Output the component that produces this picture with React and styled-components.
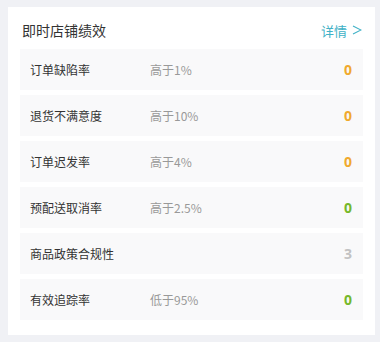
import React from "react";
import styled, { createGlobalStyle } from "styled-components";

const GlobalStyle = createGlobalStyle`
  html, body {
    margin: 0;
    padding: 0;
    background: #f0f1f5;
  }
  body {
    font-family: "Noto Sans CJK SC", "Noto Sans", sans-serif;
  }
`;

const Page = styled.div`
  padding: 7px 5px 7px 8px;
  width: 380px;
  height: 342px;
  box-sizing: border-box;
`;

const Card = styled.div`
  background: #fff;
  width: 367px;
  box-sizing: border-box;
  padding: 8px 12px 15px;
`;

const Header = styled.div`
  display: flex;
  align-items: center;
  justify-content: space-between;
  height: 30px;
  margin-bottom: 4px;
  padding: 0 1px 0 2px;
`;

const Title = styled.h2`
  margin: 0;
  font-size: 14px;
  font-weight: 400;
  color: #333;
`;

const More = styled.a`
  font-size: 13px;
  color: #3fb1c6;
  text-decoration: none;
  display: flex;
  align-items: center;
  gap: 5px;
`;

const List = styled.div`
  display: flex;
  flex-direction: column;
  gap: 5px;
`;

const Row = styled.div`
  display: flex;
  align-items: center;
  height: 41px;
  background: #f9f9fa;
  padding: 0 11px 0 10px;
`;

const Label = styled.span`
  width: 120px;
  font-size: 12px;
  color: #333;
`;

const Threshold = styled.span`
  flex: 1;
  font-size: 12px;
  color: #999;
`;

const Value = styled.span`
  font-size: 14px;
  font-weight: 700;
  font-family: "Noto Sans", sans-serif;
  color: ${(p) =>
    p.tone === "warn" ? "#f0a92e" : p.tone === "good" ? "#76b82a" : "#c2c2c2"};
`;

const rows = [
  { label: "订单缺陷率", threshold: "高于1%", value: 0, tone: "warn" },
  { label: "退货不满意度", threshold: "高于10%", value: 0, tone: "warn" },
  { label: "订单迟发率", threshold: "高于4%", value: 0, tone: "warn" },
  { label: "预配送取消率", threshold: "高于2.5%", value: 0, tone: "good" },
  { label: "商品政策合规性", threshold: "", value: 3, tone: "muted" },
  { label: "有效追踪率", threshold: "低于95%", value: 0, tone: "good" },
];

export default function App() {
  return (
    <Page>
      <GlobalStyle />
      <Card>
        <Header>
          <Title>即时店铺绩效</Title>
          <More href="#">
            详情
            <svg width="10" height="10" viewBox="0 0 10 10">
              <path d="M1 1l8 4-8 4" fill="none" stroke="#3fb1c6" strokeWidth="1.1" />
            </svg>
          </More>
        </Header>
        <List>
          {rows.map((r) => (
            <Row key={r.label}>
              <Label>{r.label}</Label>
              <Threshold>{r.threshold}</Threshold>
              <Value tone={r.tone}>{r.value}</Value>
            </Row>
          ))}
        </List>
      </Card>
    </Page>
  );
}
